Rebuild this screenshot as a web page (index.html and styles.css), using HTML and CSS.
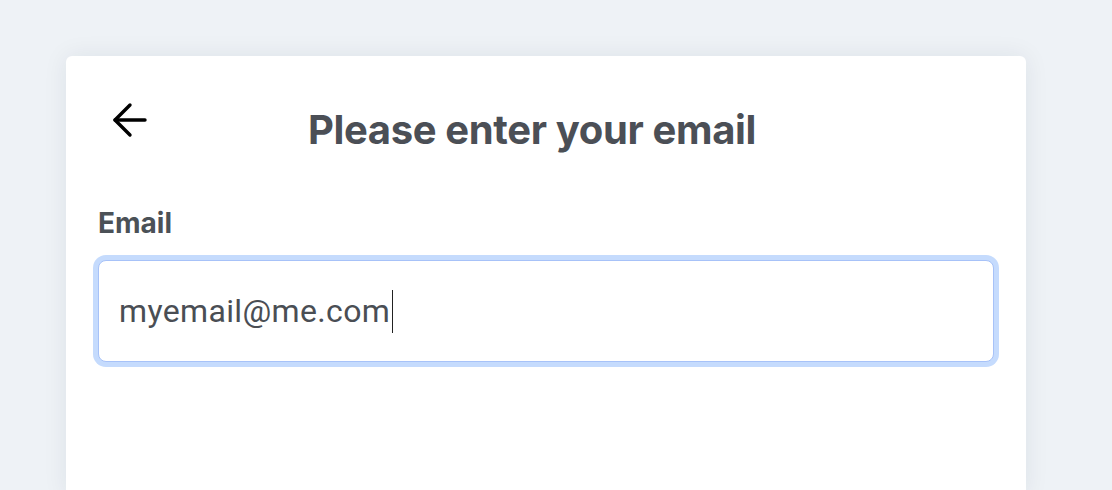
FILE: index.html
```html
<!DOCTYPE html>
<html lang="en">
<head>
    <meta charset="UTF-8">
    <meta name="viewport" content="width=device-width, initial-scale=1.0">
    <title>Enter email</title>
    <link rel="stylesheet" href="styles.css">
</head>
<body>
    <div class="card">
        <div class="header">
            <button class="back-button" type="button" aria-label="Back">
                <svg width="36" height="36" viewBox="0 0 36 36" fill="none" stroke="#000" stroke-width="3.4" stroke-linecap="round" stroke-linejoin="round">
                    <path d="M3 18H33"/>
                    <path d="M18 3L3 18L18 33"/>
                </svg>
            </button>
            <div class="title">Please enter your email</div>
        </div>
        <form class="email-form">
            <label for="email">Email</label>
            <div class="input-wrap">
                <input type="email" id="email" name="email" value="myemail@me.com" autocomplete="off">
                <span class="caret"></span>
            </div>
        </form>
    </div>
</body>
</html>
```

FILE: styles.css
```css
body {
    font-family: 'Inter', sans-serif;
    background-color: #eef2f6;
    margin: 0;
    height: 490px;
    overflow: hidden;
}

.card {
    background-color: #fff;
    width: 960px;
    margin: 56px 0 0 66px;
    height: 440px;
    padding: 46px 32px 0;
    box-sizing: border-box;
    border-radius: 6px;
    box-shadow: 0 0 24px rgba(30, 40, 60, 0.08);
}

.header {
    display: flex;
    align-items: flex-start;
}

.back-button {
    width: 48px;
    padding: 0 0 0 14px;
    background: none;
    border: none;
    cursor: pointer;
    text-align: left;
}

.back-button svg {
    display: block;
}

.title {
    flex: 1;
    text-align: center;
    padding-right: 76px;
    font-size: 40px;
    line-height: 48px;
    font-weight: 700;
    color: #4b4f56;
    letter-spacing: -0.35px;
    margin-top: 4px;
}

.email-form {
    margin-top: 51px;
}

.email-form label {
    display: block;
    font-size: 28px;
    line-height: 36px;
    font-weight: 700;
    color: #4b5157;
    margin-bottom: 19px;
}

.input-wrap {
    position: relative;
}

.email-form input {
    display: block;
    width: 100%;
    height: 102px;
    box-sizing: border-box;
    padding: 0 20px;
    border: 1px solid #a7c2f8;
    border-radius: 8px;
    box-shadow: 0 0 0 5px #c5dbfd;
    font-family: 'Roboto', sans-serif;
    font-size: 32px;
    letter-spacing: 0.35px;
    color: #4a4e54;
    outline: none;
}

/* fake text cursor after the value */
.caret {
    position: absolute;
    left: 294px;
    top: 30px;
    width: 1px;
    height: 43px;
    background-color: #222;
}
```
